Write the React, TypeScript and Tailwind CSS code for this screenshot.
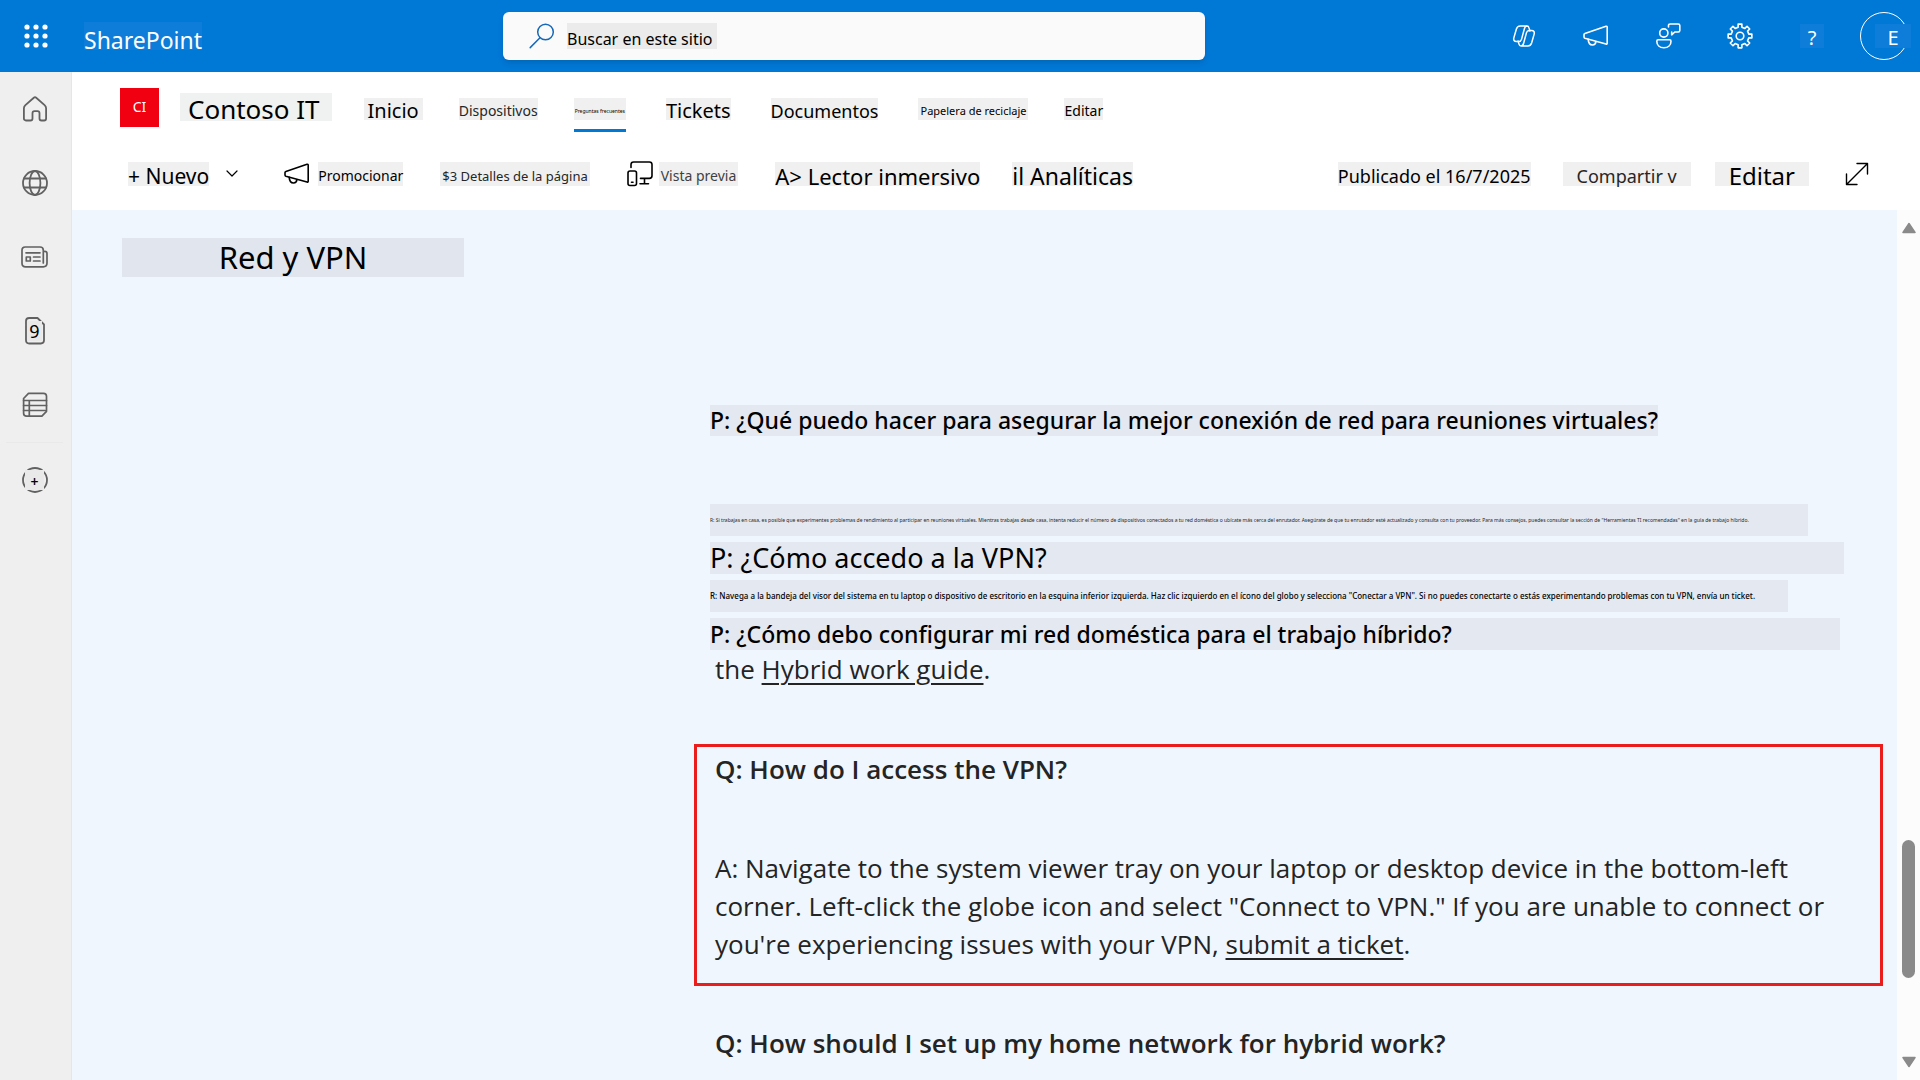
import type { ReactNode, SVGProps } from "react";

function Svg({ w, h, children, ...rest }: { w: number; h: number; children: ReactNode } & SVGProps<SVGSVGElement>) {
  return (
    <svg
      width={w}
      height={h}
      viewBox={`0 0 ${w} ${h}`}
      fill="none"
      stroke="currentColor"
      strokeWidth={1.5}
      strokeLinecap="round"
      strokeLinejoin="round"
      aria-hidden="true"
      className="shrink-0"
      {...rest}
    >
      {children}
    </svg>
  );
}

const Waffle = () => (
  <Svg w={24} h={24} fill="currentColor" stroke="none">
    {[3, 12, 21].flatMap((y) => [3, 12, 21].map((x) => <circle key={`${x}-${y}`} cx={x} cy={y} r={2.6} />))}
  </Svg>
);

const SearchIcon = () => (
  <Svg w={26} h={26} stroke="#1668b8">
    <circle cx={16.5} cy={9} r={7.8} />
    <path d="M11 14.8 1.2 24.6" />
  </Svg>
);

const copilotLobe =
  "M17.9 7 17 3.9C16.7 2.6 16 2 14.9 2H8.2C6.1 2 5 3.1 4.4 5L1.9 13.6C1.2 16 2.2 17.6 4.5 17.6H6.8c1.4 0 2.3-.8 2.7-2.2L12.3 5C12.8 3 13.7 2 15 2";
const Copilot = () => (
  <Svg w={24} h={24}>
    <path d={copilotLobe} />
    <path d={copilotLobe} transform="rotate(180 12 12)" />
  </Svg>
);

const Megaphone = () => (
  <Svg w={26} h={22} strokeWidth={1.6}>
    <path d="M1.9 8.4 23 1.3c.7-.2 1.2.1 1.2.9v16c0 .8-.5 1.1-1.2.9L1.9 13.3C1.3 13.1 1 12.7 1 12.1V9.6c0-.6.3-1 .9-1.2Z" />
    <path d="M5.2 14.4c.2 3.4 1.8 5.6 4.3 5.6 2 0 3.2-1.3 3.4-3.3" />
  </Svg>
);

const Feedback = () => (
  <Svg w={26} h={26} strokeWidth={1.6}>
    <circle cx={8.8} cy={10} r={4.1} />
    <path d="M3.2 16.8h11.4c.8 0 1.4.6 1.4 1.4 0 4-2.8 6.6-7.1 6.6s-7.1-2.6-7.1-6.6c0-.8.6-1.4 1.4-1.4Z" />
    <path d="M13.5 4V2.6c0-1 .6-1.6 1.6-1.6h8.1c1 0 1.6.6 1.6 1.6v4.8c0 1-.6 1.6-1.6 1.6h-3.4l-3.1 2.8V9" />
  </Svg>
);

function gearPath(teeth: number, outer: number, inner: number, c: number) {
  const step = (Math.PI * 2) / teeth;
  const pts: string[] = [];
  for (let i = 0; i < teeth; i++) {
    const a = i * step - Math.PI / 2;
    for (const [d, r] of [
      [-0.27, inner],
      [-0.2, outer],
      [0.2, outer],
      [0.27, inner],
    ]) {
      pts.push(`${(c + r * Math.cos(a + d * step)).toFixed(2)} ${(c + r * Math.sin(a + d * step)).toFixed(2)}`);
    }
  }
  return `M${pts.join("L")}Z`;
}
const Gear = () => (
  <Svg w={26} h={26} strokeWidth={1.6}>
    <path d={gearPath(8, 12, 9, 13)} />
    <circle cx={13} cy={13} r={3.8} />
  </Svg>
);

const Home = () => (
  <Svg w={26} h={26} strokeWidth={1.8}>
    <path d="M11.8 1.7c.7-.6 1.7-.6 2.4 0l8.4 7.4c1 .9 1.5 1.9 1.5 3.2v10.2c0 1.2-.9 2-2 2h-2.6c-1.2 0-2-.8-2-2v-5.3c0-1.3-.8-2.1-2-2.1h-3c-1.2 0-2 .8-2 2.1v5.3c0 1.2-.8 2-2 2H3.9c-1.1 0-2-.8-2-2V12.3c0-1.3.5-2.3 1.5-3.2Z" />
  </Svg>
);

const Globe = () => (
  <Svg w={26} h={26} strokeWidth={1.8}>
    <circle cx={13} cy={13} r={12} />
    <ellipse cx={13} cy={13} rx={5.4} ry={12} />
    <path d="M2 8.5h22M2 17.5h22" />
  </Svg>
);

const News = () => (
  <Svg w={27} h={22} strokeWidth={1.7}>
    <path d="M22.3 17V4.2c0-1.9-1.2-3.2-3.2-3.2H4.2C2.2 1 1 2.3 1 4.2v13c0 2.1 1.5 3.6 3.6 3.6h17.6c2.3 0 3.8-1.5 3.8-3.8V7.5c0-1.3-.9-2.1-2.2-2.1" />
    <path d="M5 6.8h14M12.5 11h6.500M12.5 15h6.5" />
    <path d="M5.3 11h4v4h-4Z" />
  </Svg>
);

const FileIcon = () => (
  <Svg w={20} h={28} strokeWidth={1.8}>
    <path d="M4.2 1h8.3L19 7.5v15.8c0 2.1-1.1 3.2-3.2 3.2H4.2c-2.1 0-3.200-1.100-3.200-3.200V4.200C1 2.100 2.100 1 4.200 1Z" />
  </Svg>
);

const ListIcon = () => (
  <Svg w={26} h={26} strokeWidth={1.7}>
    <path d="M6.5 1.3h15c2 0 3 1 3 3v15l-4.6 4.9H4.6c-2 0-3-1-3-3V6.5Z" />
    <path d="M1.6 8.5h22.9M1.6 13.5h22.9M1.6 18.5h21.7M7.3 8.5v15.7" />
  </Svg>
);

const AddCircle = () => (
  <Svg w={26} h={26} strokeWidth={1.8}>
    <circle cx={13} cy={13} r={12} />
  </Svg>
);

const Chevron = () => (
  <Svg w={14} h={8} strokeWidth={1.2}>
    <path d="m2 1 5 5 5-5" />
  </Svg>
);

const Devices = () => (
  <Svg w={26} h={26} strokeWidth={1.6}>
    <path d="M4 6.5V3.6C4 2 4.9 1 6.6 1h15.800C24 1 25 2 25 3.600v11.200c0 1.700-1 2.600-2.600 2.600h-8.900M17.500 17.400v5.400M13 22.800h8.500" />
    <rect x={1} y={10} width={8.5} height={14.5} rx={2} />
    <path d="M4.500 21.300h1.500" />
  </Svg>
);

const Expand = () => (
  <Svg w={24} h={24} strokeWidth={1.4}>
    <path d="M2 22 22 2M12 1.5h10.5V12M1.5 12v10.5H12" />
  </Svg>
);

const railItems: { label: string; icon: ReactNode; over?: ReactNode }[] = [
  { label: "Inicio", icon: <Home /> },
  { label: "Mis sitios", icon: <Globe /> },
  { label: "Noticias", icon: <News /> },
  {
    label: "Archivos",
    icon: <FileIcon />,
    over: <span className="absolute bg-[#e9e9e9] px-0.5 text-lg leading-5 text-black">9</span>,
  },
  { label: "Listas", icon: <ListIcon /> },
];

const navLinks = [
  { text: "Inicio", cls: "text-xl px-1" },
  { text: "Dispositivos", cls: "text-sm text-neutral-800" },
  { text: "Preguntas frecuentes", cls: "text-[5px] px-px mr-1", current: true },
  { text: "Tickets", cls: "text-xl mr-1" },
  { text: "Documentos", cls: "text-lg mr-1" },
  { text: "Papelera de reciclaje", cls: "text-[11px] px-0.5" },
  { text: "Editar", cls: "text-sm" },
];

function Tag({ className, children }: { className: string; children: ReactNode }) {
  return <span className={`bg-[#f0f0f0] pt-1 leading-5 whitespace-nowrap ${className}`}>{children}</span>;
}

export default function App() {
  return (
    <div className="flex h-screen flex-col overflow-hidden bg-white font-['Noto_Sans',sans-serif] text-black">
      <header className="flex h-[72px] shrink-0 items-center bg-[#0078d6] pr-3 text-white">
        <div className="flex w-[503px] shrink-0 items-center gap-9 pl-6">
          <button type="button" aria-label="Iniciador de aplicaciones">
            <Waffle />
          </button>
          <a href="#sharepoint" className="bg-[#0d7dd9] pt-2 text-[23px] leading-5">
            SharePoint
          </a>
        </div>
        <label className="flex h-12 w-full max-w-[702px] items-center gap-3 rounded-md bg-[#fafafa] pl-[26px] shadow-md">
          <SearchIcon />
          <input
            type="text"
            aria-label="Buscar en este sitio"
            placeholder="Buscar en este sitio"
            className="h-[26px] w-[150px] bg-[#ebebeb] pt-1.5 text-base text-black placeholder:text-black placeholder:opacity-100"
          />
        </label>
        <div className="ml-auto flex shrink-0 items-center gap-9 pl-6">
          <div className="flex items-center gap-12">
            <button type="button" aria-label="Copilot" className="flex w-6 justify-center">
              <Copilot />
            </button>
            <button type="button" aria-label="Anuncios" className="flex w-6 justify-center">
              <Megaphone />
            </button>
            <button type="button" aria-label="Comentarios" className="flex w-6 justify-center">
              <Feedback />
            </button>
            <button type="button" aria-label="Configuración" className="flex w-6 justify-center">
              <Gear />
            </button>
            <button type="button" aria-label="Ayuda" className="w-6 bg-[#0d7dd9] pt-1 text-xl leading-5">
              ?
            </button>
          </div>
          <button type="button" aria-label="Cuenta" className="relative size-12 rounded-full border border-white">
            <span className="absolute top-[11px] left-3.5 w-9 bg-[#0d7dd9] pt-1 text-xl leading-5">E</span>
          </button>
        </div>
      </header>

      <div className="flex min-h-0 flex-1">
        <nav aria-label="Barra de aplicaciones" className="flex w-[72px] shrink-0 flex-col border-r border-[#e6e6e6] bg-[#efefef] pr-0.5 text-[#616161]">
          {railItems.map((it) => (
            <button key={it.label} type="button" aria-label={it.label} className="relative flex h-[74px] items-center justify-center">
              {it.icon}
              {it.over}
            </button>
          ))}
          <hr className="mx-1.5 border-[#e9e9e9]" />
          <button type="button" aria-label="Crear" className="relative flex h-[74px] items-center justify-center">
            <AddCircle />
            <span className="absolute w-[19px] bg-[#e9e9e9] pt-1 text-sm leading-4 font-semibold text-black">+</span>
          </button>
        </nav>

        <div className="flex min-w-0 flex-1 flex-col">
          <div className="flex h-[70px] shrink-0 items-center pl-12">
            <span className="flex size-[39px] items-center justify-center bg-[#f00010] text-sm text-white">CI</span>
            <a href="#sitio" className="ml-[21px] bg-[#f0f1f1] pt-1 pr-3 pl-2 text-[26px] leading-6">
              Contoso IT
            </a>
            <nav aria-label="Sitio" className="mt-1 ml-8 flex items-center gap-9">
              {navLinks.map((l) => (
                <a
                  key={l.text}
                  href="#nav"
                  aria-current={l.current ? "page" : undefined}
                  className={`relative bg-[#f0f0f0] pt-1 leading-[18px] whitespace-nowrap ${l.cls}`}
                >
                  {l.text}
                  {l.current && <span className="absolute inset-x-0 top-[31px] h-[3px] bg-[#0078d6]" />}
                </a>
              ))}
            </nav>
          </div>

          <div className="flex h-[68px] shrink-0 items-center justify-between pr-[51px] pb-1 pl-14">
            <div className="flex items-center gap-[37px]">
              <button type="button" className="flex items-center gap-4 pr-2">
                <Tag className="text-[21px]">+ Nuevo</Tag>
                <Chevron />
              </button>
              <button type="button" className="flex items-center gap-2">
                <Megaphone />
                <Tag className="text-sm">Promocionar</Tag>
              </button>
              <button type="button" className="flex">
                <Tag className="px-0.5 text-[13px] text-neutral-800">$3 Detalles de la página</Tag>
              </button>
              <button type="button" className="flex items-center gap-1.5">
                <Devices />
                <Tag className="px-0.5 text-sm text-neutral-700">Vista previa</Tag>
              </button>
              <div className="flex items-center gap-8">
                <button type="button" className="flex">
                  <Tag className="text-[22px]">A&gt; Lector inmersivo</Tag>
                </button>
                <button type="button" className="flex">
                  <Tag className="text-[23px]">il Analíticas</Tag>
                </button>
              </div>
            </div>
            <div className="flex items-center gap-6">
              <Tag className="mr-2 text-lg">Publicado el 16/7/2025</Tag>
              <button type="button" className="flex">
                <Tag className="px-3.5 text-lg text-neutral-800">Compartir v</Tag>
              </button>
              <button type="button" className="flex">
                <Tag className="px-3.5 text-2xl">Editar</Tag>
              </button>
              <button type="button" aria-label="Expandir" className="ml-3">
                <Expand />
              </button>
            </div>
          </div>

          <div className="flex min-h-0 flex-1 bg-[#eff6fd]">
            <main className="flex min-w-0 flex-1 overflow-hidden pr-3.5">
              <div className="w-[622px] shrink-0 pt-7 pl-[50px]">
                <h1 className="w-[342px] bg-[#e1e6ee] text-center text-[31px] leading-[39px]">Red y VPN</h1>
              </div>
              <div className="min-w-0 flex-1 pt-[195px]">
                <div className="flex flex-col items-start gap-1.5 pl-4">
                  <h2 className="mb-[62px] bg-[#e4e8f0] text-[23px] leading-[31px] font-medium">
                    P: ¿Qué puedo hacer para asegurar la mejor conexión de red para reuniones virtuales?
                  </h2>
                  <p className="w-full max-w-[1098px] overflow-hidden bg-[#e4e8f0] text-[5px] leading-8 whitespace-nowrap text-neutral-800">
                    R: Si trabajas en casa, es posible que experimentes problemas de rendimiento al participar en reuniones virtuales. Mientras trabajas desde casa, intenta reducir el número de dispositivos conectados a tu red doméstica o ubícate más cerca del enrutador. Asegúrate de que tu enrutador esté actualizado y consulta con tu proveedor. Para más consejos, puedes consultar la sección de &quot;Herramientas TI recomendadas&quot; en la guía de trabajo híbrido.
                  </p>
                  <h2 className="w-full max-w-[1134px] bg-[#e4e8f0] text-[27px] leading-8">P: ¿Cómo accedo a la VPN?</h2>
                  <p className="w-full max-w-[1078px] bg-[#e4e8f0] text-[8px] leading-8 font-medium whitespace-nowrap">
                    R: Navega a la bandeja del visor del sistema en tu laptop o dispositivo de escritorio en la esquina inferior izquierda. Haz clic izquierdo en el ícono del globo y selecciona &quot;Conectar a VPN&quot;. Si no puedes conectarte o estás experimentando problemas con tu VPN, envía un ticket.
                  </p>
                  <h2 className="w-full max-w-[1130px] bg-[#e4e8f0] text-[23px] leading-8 font-medium">
                    P: ¿Cómo debo configurar mi red doméstica para el trabajo híbrido?
                  </h2>
                </div>
                <div className="font-['Open_Sans',sans-serif] text-[26px] leading-[38px] text-[#242424]">
                  <p className="pl-[21px]">
                    the{" "}
                    <a href="#guia" className="underline decoration-2 underline-offset-4">
                      Hybrid work guide
                    </a>
                    .
                  </p>
                  <section className="mt-14 border-3 border-[#eb1c1c] pt-[3px] pr-6 pb-5 pl-[18px]">
                    <h2 className="font-semibold">Q: How do I access the VPN?</h2>
                    <p className="mt-[61px]">
                      A: Navigate to the system viewer tray on your laptop or desktop device in the bottom-left corner. Left-click the globe icon and select &quot;Connect to VPN.&quot; If you are unable to connect or you&apos;re experiencing issues with your VPN,{" "}
                      <a href="#ticket" className="underline decoration-2 underline-offset-4">
                        submit a ticket
                      </a>
                      .
                    </p>
                  </section>
                  <h2 className="mt-[38px] pl-[21px] font-semibold">Q: How should I set up my home network for hybrid work?</h2>
                </div>
              </div>
            </main>
            <div className="flex w-[23px] shrink-0 flex-col items-center bg-[#fcfcfc] pt-3 pb-3 text-[#8a8a8a]">
              <Svg w={14} h={12} fill="currentColor">
                <path d="M7 1.5 13 10.5H1Z" />
              </Svg>
              <div className="grow-[608]" />
              <div className="h-[138px] w-[13px] rounded-full bg-[#8a8a8a]" />
              <div className="grow-[78]" />
              <Svg w={14} h={12} fill="currentColor">
                <path d="M7 10.5 1 1.5h12Z" />
              </Svg>
            </div>
          </div>
        </div>
      </div>
    </div>
  );
}
